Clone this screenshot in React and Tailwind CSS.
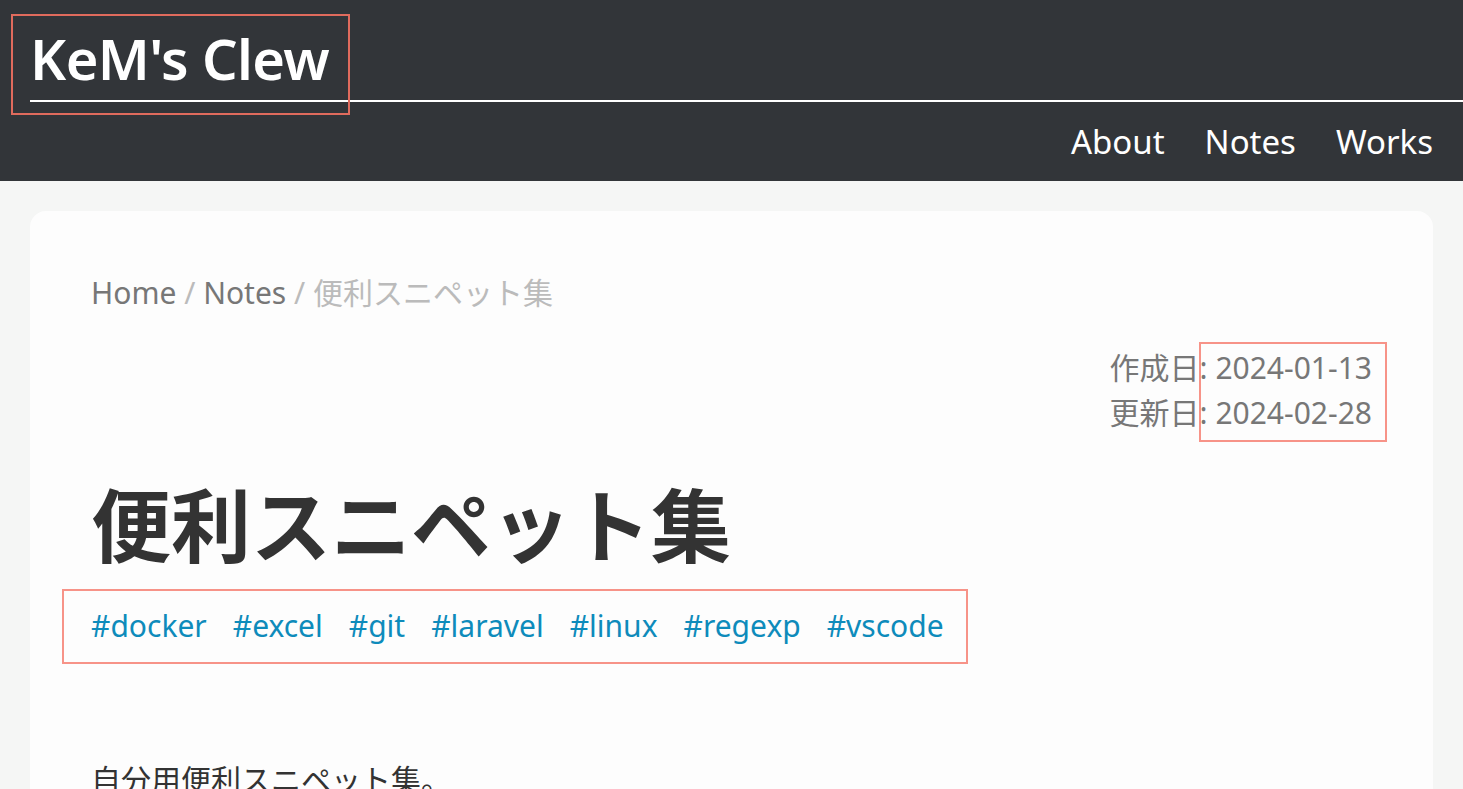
export default function App() {
  const tags = ["docker", "excel", "git", "laravel", "linux", "regexp", "vscode"];

  return (
    <div
      className="relative min-h-screen bg-[#f5f6f5] overflow-hidden"
      style={{ fontFamily: '"Noto Sans", "Noto Sans CJK JP", sans-serif' }}
    >
      <header className="bg-[#323539] h-[181px] text-white">
        <div className="pl-[30px] pt-[26px]">
          <div className="text-[56px] font-semibold leading-[64px] tracking-[-0.6px]">KeM's Clew</div>
          <div className="mt-[10px] h-[2px] bg-white"></div>
        </div>
        <nav className="flex justify-end gap-[40px] pr-[30px] pt-[20px] text-[33px] leading-[40px]">
          <a>About</a>
          <a>Notes</a>
          <a>Works</a>
        </nav>
      </header>

      <main className="px-[30px] pt-[30px]">
        <div className="bg-[#fdfdfd] rounded-[16px] px-[61px] pt-[60px] pb-[40px]">
          <div className="text-[30px] leading-[44px] text-[#777]">
            Home <span className="text-[#bbb]">/</span> Notes{" "}
            <span className="text-[#bbb]">/ 便利スニペット集</span>
          </div>

          <div className="mt-[30px] flex justify-end text-[30px] leading-[45px] text-[#777]">
            <div className="text-left">
              <div>作成日: 2024-01-13</div>
              <div>更新日: 2024-02-28</div>
            </div>
          </div>

          <h1 className="mt-[42px] text-[80px] font-bold leading-[96px] text-[#333]">便利スニペット集</h1>

          <div className="mt-[31px] flex gap-[26px] text-[30px] leading-[44px] text-[#0e8bbb]">
            {tags.map((t) => (
              <a key={t}>#{t}</a>
            ))}
          </div>

          <p className="mt-[110px] text-[30px] leading-[44px] text-[#333]">自分用便利スニペット集。</p>
        </div>
      </main>

      {/* annotation outlines */}
      <div className="absolute left-[11px] top-[14px] w-[339px] h-[101px] border-2 border-[#e06b5d] pointer-events-none"></div>
      <div className="absolute left-[1199px] top-[342px] w-[188px] h-[100px] border-2 border-[#f79388] pointer-events-none"></div>
      <div className="absolute left-[62px] top-[589px] w-[906px] h-[75px] border-2 border-[#f79388] pointer-events-none"></div>
    </div>
  );
}
